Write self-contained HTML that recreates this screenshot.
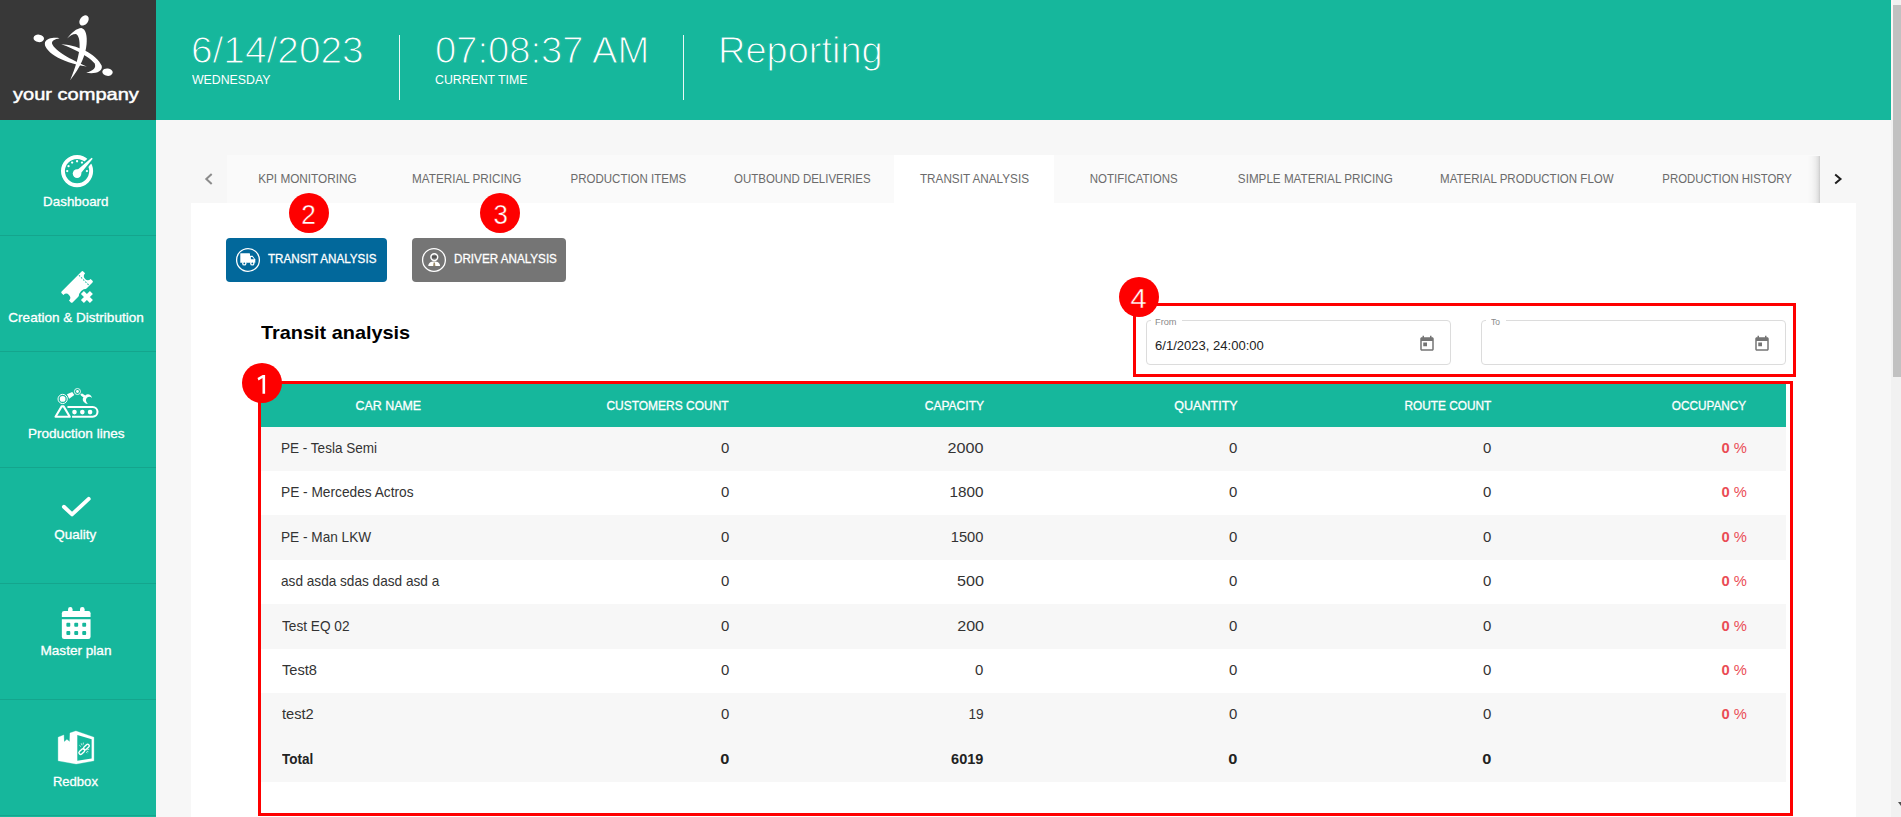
<!DOCTYPE html>
<html lang="en">
<head>
<meta charset="utf-8">
<title>Reporting - Transit analysis</title>
<style>
html,body{margin:0;padding:0;}
body{width:1901px;height:817px;overflow:hidden;background:#f7f7f7;position:relative;font-family:"Liberation Sans",sans-serif;}
.root{position:absolute;left:0;top:0;width:1901px;height:817px;overflow:hidden;}
.a{position:absolute;}
.t{position:absolute;white-space:nowrap;line-height:1;}
.teal{background:#16b79c;}
.sep{position:absolute;left:0;width:156px;height:1px;background:#14a58d;}
.row{position:absolute;left:261px;width:1525px;background:#f7f7f7;}
.circ{position:absolute;width:40px;height:40px;border-radius:50%;background:#fe0000;}
svg{position:absolute;overflow:visible;}
</style>
</head>
<body>
<div class="root">
<!-- header -->
<div class="a teal" style="left:156px;top:0;width:1735px;height:120px;"></div>
<div class="a" style="left:399px;top:35px;width:1px;height:65px;background:#e9f8f5;"></div>
<div class="a" style="left:683px;top:35px;width:1px;height:65px;background:#e9f8f5;"></div>
<!-- logo -->
<div class="a" style="left:0;top:0;width:156px;height:120px;background:#383838;"></div>
<svg style="left:0;top:0" width="156" height="120" viewBox="0 0 156 120"><g transform="translate(28,8) scale(0.09794)" fill="#fff">
<ellipse cx="572" cy="127" rx="58" ry="41" transform="rotate(-52 572 127)"/>
<ellipse cx="110" cy="310" rx="54" ry="38" transform="rotate(8 110 310)"/>
<ellipse cx="812" cy="655" rx="53" ry="38" transform="rotate(8 812 655)"/>
<path d="M400,312 C440,250 500,205 545,203 C592,212 607,290 598,370 C588,480 540,600 430,737 C482,620 522,480 527,400 C530,340 520,280 490,266 C455,266 425,286 400,312 Z"/>
<path d="M322,308 C260,298 188,312 174,350 C150,430 330,560 600,597 C440,528 272,436 246,365 C240,335 270,318 322,308 Z"/>
<path d="M340,369 C480,370 705,466 753,590 C766,655 680,676 594,661 C668,642 700,612 680,565 C648,515 490,420 340,369 Z"/>
</g></svg>
<!-- sidebar -->
<div class="a teal" style="left:0;top:120px;width:156px;height:697px;"></div>
<div class="sep" style="top:235px"></div>
<div class="sep" style="top:351px"></div>
<div class="sep" style="top:467px"></div>
<div class="sep" style="top:583px"></div>
<div class="sep" style="top:699px"></div>
<div class="sep" style="top:815px"></div>
<svg style="left:0;top:0" width="156" height="240" viewBox="0 0 156 240"><g fill="#fff">
<circle cx="77.06" cy="171.09" r="14.1" fill="none" stroke="#fff" stroke-width="3.9"/>
<polygon points="80.06,176.54 95.11,158.95 91.40,155.31 74.06,170.66" fill="#16b79c"/>
<circle cx="67.21" cy="171.09" r="1.15"/><circle cx="68.53" cy="166.16" r="1.15"/><circle cx="72.14" cy="162.56" r="1.15"/><circle cx="77.06" cy="161.24" r="1.15"/><circle cx="81.98" cy="162.56" r="1.15"/><circle cx="86.91" cy="171.09" r="1.15"/>
<polygon points="78.99,175.49 92.73,158.73 91.67,157.67 75.13,171.71"/>
<circle cx="77.06" cy="173.6" r="4.3"/>
</g></svg>
<svg style="left:0;top:0" width="156" height="360" viewBox="0 0 156 360">
<g transform="rotate(-45 77.06 286.94)"><path d="M62.96,279.19 L91.16,279.19 Q92.36,279.19 92.36,280.39 L92.36,283.04 A3.9,3.9 0 0 0 92.36,290.84 L92.36,293.49 Q92.36,294.69 91.16,294.69 L62.96,294.69 Q61.76,294.69 61.76,293.49 L61.76,290.84 A3.9,3.9 0 0 0 61.76,283.04 L61.76,280.39 Q61.76,279.19 62.96,279.19 Z" fill="#fff"/>
<line x1="86.66" y1="279.99" x2="86.66" y2="293.89" stroke="#16b79c" stroke-width="1" stroke-dasharray="1.6 1.4"/></g>
<circle cx="86.9" cy="296.9" r="8.2" fill="#16b79c"/>
<path d="M82.4,292.4 L91.4,301.4 M91.4,292.4 L82.4,301.4" stroke="#fff" stroke-width="4.2" fill="none" stroke-linecap="butt"/>
</svg>
<svg style="left:0;top:0" width="156" height="480" viewBox="0 0 156 480">
<g transform="translate(48,382) scale(0.05141)" fill="#fff" stroke="none">
<circle cx="285" cy="330" r="90" fill="none" stroke="#fff" stroke-width="19"/>
<circle cx="285" cy="330" r="56"/>
<circle cx="573" cy="185" r="59" fill="none" stroke="#fff" stroke-width="17"/>
<circle cx="573" cy="185" r="27"/>
<polygon points="368,240 472,193 512,255 412,328"/>
<path d="M630,232 L665,222 L725,262 C770,215 840,240 858,312 C830,285 790,280 762,302 C725,332 735,390 778,428 C700,420 650,340 690,300 L640,262 Z"/>
<path d="M266,474 L304,474 L424,676 L146,676 Z" fill="none" stroke="#fff" stroke-width="40" stroke-linejoin="round"/>
<path d="M378,486 L868,486 A95,95 0 0 1 868,676 L468,676" fill="none" stroke="#fff" stroke-width="40"/>
<circle cx="515" cy="585" r="45"/><circle cx="668" cy="585" r="45"/><circle cx="818" cy="585" r="45"/>
</g></svg>
<svg style="left:0;top:0" width="156" height="600" viewBox="0 0 156 600">
<path d="M63.9,506.8 L72.05,514.4 L88.7,498.9" fill="none" stroke="#fff" stroke-width="3.9" stroke-linecap="round" stroke-linejoin="round"/></svg>
<svg style="left:0;top:0" width="156" height="700" viewBox="0 0 156 700"><g fill="#fff">
<path d="M61.85,616.9 V613.2 Q61.85,611 64.05,611 H88.37 Q90.57,611 90.57,613.2 V616.9 Z"/>
<rect x="68.05" y="607.04" width="4.5" height="6" rx="2.2"/>
<rect x="80" y="607.04" width="4.6" height="6" rx="2.2"/>
<path d="M61.85,619.14 H90.57 V636.7 Q90.57,639 88.27,639 H64.15 Q61.85,639 61.85,636.7 Z"/>
<rect x="66.38" y="622.82" width="3.9" height="3.9" rx="0.9" fill="#16b79c"/><rect x="66.38" y="630.99" width="3.9" height="3.9" rx="0.9" fill="#16b79c"/><rect x="74.26" y="622.82" width="3.9" height="3.9" rx="0.9" fill="#16b79c"/><rect x="74.26" y="630.99" width="3.9" height="3.9" rx="0.9" fill="#16b79c"/><rect x="82.25" y="622.82" width="3.9" height="3.9" rx="0.9" fill="#16b79c"/><rect x="82.25" y="630.99" width="3.9" height="3.9" rx="0.9" fill="#16b79c"/></g></svg>
<svg style="left:0;top:0" width="156" height="817" viewBox="0 0 156 817">
<polygon points="58.16,737.22 63.79,734.97 64.07,742 66.88,739.48 69.7,741.73 69.98,733 75.89,731.03 93.9,737.22 93.9,760.86 76.17,763.96 58.16,760.86" fill="#fff" stroke="#fff" stroke-width="0.3" stroke-linejoin="round"/>
<polygon points="77.29,734.97 91.64,739.19 91.64,758.61 77.29,760.86" fill="#16b79c"/>
<g fill="none" stroke="#fff" stroke-width="1.4">
<rect x="78.50" y="749.92" width="6.6" height="3.3" rx="1.65" transform="rotate(-43 81.8 751.57)"/>
<rect x="83.10" y="745.35" width="6.6" height="3.3" rx="1.65" transform="rotate(-43 86.4 747)"/>
</g>
<g stroke="#fff" stroke-width="0.7" fill="none"><path d="M79.3,745.2 L80.9,746.6 M81.2,743.3 L82,745.3 M83.4,742.6 L83.2,744.6 M89.2,749.3 L87.3,749.6 M88.4,751.8 L86.6,751 M87.3,753.2 L86.2,752"/></g>
</svg>
<!-- scrollbar -->
<div class="a" style="left:1891px;top:0;width:10px;height:817px;background:#f1f1f1;"></div>
<div class="a" style="left:1891px;top:0;width:2px;height:120px;background:#fbf6f6;"></div>
<div class="a" style="left:1893px;top:5px;width:8px;height:372px;background:#c1c1c1;"></div>
<div class="a" style="left:1897.5px;top:801.5px;width:0;height:0;border-left:3.8px solid transparent;border-right:3.8px solid transparent;border-top:4px solid #505050;"></div>
<!-- tabs -->
<div class="a" style="left:227px;top:155px;width:1593px;height:48px;background:#fafafa;"></div>
<div class="a" style="left:894px;top:155px;width:160px;height:48px;background:#fff;"></div>
<div class="a" style="left:1820px;top:155px;width:36px;height:48px;background:#f7f7f7;"></div>
<div class="a" style="left:1807px;top:156px;width:13px;height:47px;background:linear-gradient(to right,rgba(0,0,0,0) 0%,rgba(0,0,0,0.015) 35%,rgba(0,0,0,0.05) 65%,rgba(0,0,0,0.1) 85%,rgba(0,0,0,0.19) 100%);"></div>
<svg style="left:203px;top:172px" width="12" height="14" viewBox="0 0 12 14"><path d="M8.7 1.9 L3.3 7 L8.7 12.1" fill="none" stroke="#8c8c8c" stroke-width="2"/></svg>
<svg style="left:1831px;top:172px" width="12" height="14" viewBox="0 0 12 14"><path d="M4.2 2.6 L9.5 7 L4.2 11.4" fill="none" stroke="#1e1e1e" stroke-width="2"/></svg>
<!-- panel -->
<div class="a" style="left:191px;top:203px;width:1665px;height:614px;background:#fff;"></div>
<!-- buttons -->
<div class="a" style="left:226px;top:238px;width:161px;height:44px;border-radius:4px;background:#02689b;"></div>
<div class="a" style="left:412px;top:238px;width:154px;height:44px;border-radius:4px;background:#757575;"></div>
<svg style="left:0;top:0" width="600" height="300" viewBox="0 0 600 300">
<circle cx="248" cy="259.97" r="11.4" fill="none" stroke="#fff" stroke-width="1.3"/>
<g fill="#fff"><rect x="240.3" y="253.35" width="9.7" height="9.5" rx="0.4"/>
<path d="M250,255.8 H252.6 L255.3,259.4 V262.85 H250 Z"/>
<circle cx="244.3" cy="263.4" r="2.2"/><circle cx="252.3" cy="263.4" r="2.2"/></g>
<g fill="#02689b"><circle cx="244.3" cy="263.4" r="0.9"/><circle cx="252.3" cy="263.4" r="0.9"/><path d="M250.9,256.9 H252.3 L254.1,259.3 H250.9 Z"/></g>
<circle cx="433.97" cy="259.97" r="11.4" fill="none" stroke="#fff" stroke-width="1.3"/>
<circle cx="434.3" cy="257.1" r="3.4" fill="none" stroke="#fff" stroke-width="1.5"/>
<rect x="432" y="256.3" width="4.6" height="1.3" fill="#444"/>
<path d="M428.3,265.9 C428.3,262.6 430.8,261.4 434.2,261.4 C437.6,261.4 440,262.6 440,265.9 Z" fill="#fff"/>
<path d="M433.6,262.6 h1.3 l0.5,3.3 h-2.3 Z" fill="#9a8a6a"/>
</svg>
<!-- date inputs -->
<div class="a" style="left:1146px;top:320px;width:303px;height:43px;border:1px solid #dcdcdc;border-radius:4px;"></div>
<div class="a" style="left:1151px;top:319px;width:31px;height:3px;background:#fff;"></div>
<div class="a" style="left:1481px;top:320px;width:303px;height:43px;border:1px solid #dcdcdc;border-radius:4px;"></div>
<div class="a" style="left:1486px;top:319px;width:19.5px;height:3px;background:#fff;"></div>
<svg style="left:1418px;top:335px" width="18" height="18" viewBox="0 0 24 24"><path fill="#757575" d="M19 3h-1V1h-2v2H8V1H6v2H5c-1.11 0-1.99.9-1.99 2L3 19c0 1.1.89 2 2 2h14c1.1 0 2-.9 2-2V5c0-1.1-.9-2-2-2zm0 16H5V8h14v11zM7 10h5v5H7z"/></svg><svg style="left:1753px;top:335px" width="18" height="18" viewBox="0 0 24 24"><path fill="#757575" d="M19 3h-1V1h-2v2H8V1H6v2H5c-1.11 0-1.99.9-1.99 2L3 19c0 1.1.89 2 2 2h14c1.1 0 2-.9 2-2V5c0-1.1-.9-2-2-2zm0 16H5V8h14v11zM7 10h5v5H7z"/></svg>
<!-- table -->
<div class="a teal" style="left:261px;top:384px;width:1525px;height:43px;"></div>
<div class="row" style="top:427px;height:44px"></div>
<div class="row" style="top:515.4px;height:44.6px"></div>
<div class="row" style="top:604.4px;height:44.4px"></div>
<div class="row" style="top:693.2px;height:88.4px"></div>
<!-- red annotation boxes -->
<div class="a" style="left:258px;top:381px;width:1529px;height:429px;border:3px solid #fe0000;"></div>
<div class="a" style="left:1133px;top:303px;width:657px;height:67.5px;border:3px solid #fe0000;"></div>
<div class="circ" style="left:289px;top:193px"></div>
<div class="circ" style="left:480.4px;top:193px"></div>
<div class="circ" style="left:242px;top:363.3px"></div>
<div class="circ" style="left:1119px;top:277px"></div>
<svg style="left:0;top:0" width="300" height="400" viewBox="0 0 300 400"><path d="M257.5,378.1 L262.7,375.1 L265.1,375.1 L265.1,393.8 L262.5,393.8 L262.5,378 L258.5,380.4 Z" fill="#fff"/></svg>
<div class="t" style="top:32.28px;font-size:37px;color:#fff;left:190.78px;transform-origin:0 0;transform:scaleX(1.0490);-webkit-text-stroke:1.1px #16b79c;">6/14/2023</div>
<div class="t" style="top:73.94px;font-size:12px;color:#fff;left:192.26px;transform-origin:0 0;transform:scaleX(1.0261);">WEDNESDAY</div>
<div class="t" style="top:32.28px;font-size:37px;color:#fff;left:434.62px;transform-origin:0 0;transform:scaleX(1.0311);-webkit-text-stroke:1.1px #16b79c;">07:08:37 AM</div>
<div class="t" style="top:73.94px;font-size:12px;color:#fff;left:435.23px;transform-origin:0 0;transform:scaleX(1.0245);">CURRENT TIME</div>
<div class="t" style="top:32.28px;font-size:37px;color:#fff;left:718.19px;transform-origin:0 0;transform:scaleX(1.0261);-webkit-text-stroke:1.1px #16b79c;">Reporting</div>
<div class="t" style="top:85.73px;font-size:16.5px;color:#fff;left:12.76px;transform-origin:0 0;transform:scaleX(1.2148);-webkit-text-stroke:0.45px #fff;">your company</div>
<div class="t" style="top:195.00px;font-size:13px;color:#fff;left:44.25px;transform-origin:50% 0;transform:scaleX(1.0278);-webkit-text-stroke:0.3px #fff;">Dashboard</div>
<div class="t" style="top:311.00px;font-size:13px;color:#fff;left:11.21px;transform-origin:50% 0;transform:scaleX(1.0411);-webkit-text-stroke:0.3px #fff;">Creation &amp; Distribution</div>
<div class="t" style="top:427.00px;font-size:13px;color:#fff;left:29.65px;transform-origin:50% 0;transform:scaleX(1.0453);-webkit-text-stroke:0.3px #fff;">Production lines</div>
<div class="t" style="top:528.00px;font-size:13px;color:#fff;left:55.42px;transform-origin:50% 0;transform:scaleX(1.0348);-webkit-text-stroke:0.3px #fff;">Quality</div>
<div class="t" style="top:644.30px;font-size:13px;color:#fff;left:42.07px;transform-origin:50% 0;transform:scaleX(1.0446);-webkit-text-stroke:0.3px #fff;">Master plan</div>
<div class="t" style="top:775.00px;font-size:13px;color:#fff;left:53.29px;transform-origin:50% 0;transform:scaleX(1.0046);-webkit-text-stroke:0.3px #fff;">Redbox</div>
<div class="t" style="top:172.30px;font-size:13px;color:#6b6b6b;left:252.50px;transform-origin:50% 0;transform:scaleX(0.9058);">KPI MONITORING</div>
<div class="t" style="top:172.30px;font-size:13px;color:#6b6b6b;left:406.31px;transform-origin:50% 0;transform:scaleX(0.9000);">MATERIAL PRICING</div>
<div class="t" style="top:172.30px;font-size:13px;color:#6b6b6b;left:562.97px;transform-origin:50% 0;transform:scaleX(0.8834);">PRODUCTION ITEMS</div>
<div class="t" style="top:172.30px;font-size:13px;color:#6b6b6b;left:724.59px;transform-origin:50% 0;transform:scaleX(0.8832);">OUTBOUND DELIVERIES</div>
<div class="t" style="top:172.30px;font-size:13px;color:#6b6b6b;left:913.99px;transform-origin:50% 0;transform:scaleX(0.9018);">TRANSIT ANALYSIS</div>
<div class="t" style="top:172.30px;font-size:13px;color:#6b6b6b;left:1084.04px;transform-origin:50% 0;transform:scaleX(0.8843);">NOTIFICATIONS</div>
<div class="t" style="top:172.30px;font-size:13px;color:#6b6b6b;left:1228.97px;transform-origin:50% 0;transform:scaleX(0.8973);">SIMPLE MATERIAL PRICING</div>
<div class="t" style="top:172.30px;font-size:13px;color:#6b6b6b;left:1429.10px;transform-origin:50% 0;transform:scaleX(0.8867);">MATERIAL PRODUCTION FLOW</div>
<div class="t" style="top:172.30px;font-size:13px;color:#6b6b6b;left:1652.54px;transform-origin:50% 0;transform:scaleX(0.8737);">PRODUCTION HISTORY</div>
<div class="t" style="top:251.80px;font-size:13px;color:#fff;left:268.48px;transform-origin:0 0;transform:scaleX(0.8968);-webkit-text-stroke:0.3px #fff;">TRANSIT ANALYSIS</div>
<div class="t" style="top:251.80px;font-size:13px;color:#fff;left:453.77px;transform-origin:0 0;transform:scaleX(0.8977);-webkit-text-stroke:0.3px #fff;">DRIVER ANALYSIS</div>
<div class="t" style="top:323.84px;font-size:18.5px;color:#000;font-weight:700;left:261.44px;transform-origin:0 0;transform:scaleX(1.0746);">Transit analysis</div>
<div class="t" style="top:200.92px;font-size:27.5px;color:#fff;left:301.44px;transform-origin:50% 0;transform:scaleX(0.9576);-webkit-text-stroke:0.4px #fe0000;">2</div>
<div class="t" style="top:200.92px;font-size:27.5px;color:#fff;left:492.59px;transform-origin:50% 0;transform:scaleX(0.9415);-webkit-text-stroke:0.4px #fe0000;">3</div>
<div class="t" style="top:284.92px;font-size:27.5px;color:#fff;left:1131.47px;transform-origin:50% 0;transform:scaleX(1.0602);-webkit-text-stroke:0.4px #fe0000;">4</div>
<div class="t" style="top:317.78px;font-size:9px;color:#8a8a8a;left:1154.79px;transform-origin:0 0;transform:scaleX(1.0241);">From</div>
<div class="t" style="top:317.88px;font-size:9px;color:#8a8a8a;left:1490.53px;transform-origin:0 0;transform:scaleX(0.9388);">To</div>
<div class="t" style="top:338.70px;font-size:13px;color:#222;left:1154.81px;transform-origin:0 0;transform:scaleX(1.0040);">6/1/2023, 24:00:00</div>
<div class="t" style="top:398.70px;font-size:13px;color:#fff;left:353.92px;transform-origin:50% 0;transform:scaleX(0.9560);-webkit-text-stroke:0.3px #fff;">CAR NAME</div>
<div class="t" style="top:398.70px;font-size:13px;color:#fff;right:1172.04px;transform-origin:100% 0;transform:scaleX(0.9216);-webkit-text-stroke:0.3px #fff;">CUSTOMERS COUNT</div>
<div class="t" style="top:398.70px;font-size:13px;color:#fff;right:917.12px;transform-origin:100% 0;transform:scaleX(0.9270);-webkit-text-stroke:0.3px #fff;">CAPACITY</div>
<div class="t" style="top:398.70px;font-size:13px;color:#fff;right:662.87px;transform-origin:100% 0;transform:scaleX(0.9649);-webkit-text-stroke:0.3px #fff;">QUANTITY</div>
<div class="t" style="top:398.70px;font-size:13px;color:#fff;right:409.62px;transform-origin:100% 0;transform:scaleX(0.9117);-webkit-text-stroke:0.3px #fff;">ROUTE COUNT</div>
<div class="t" style="top:398.70px;font-size:13px;color:#fff;right:154.58px;transform-origin:100% 0;transform:scaleX(0.9060);-webkit-text-stroke:0.3px #fff;">OCCUPANCY</div>
<div class="t" style="top:439.80px;font-size:15px;color:#333;left:280.93px;transform-origin:0 0;transform:scaleX(0.9027);">PE - Tesla Semi</div>
<div class="t" style="top:439.80px;font-size:15px;color:#333;right:1171.71px;transform-origin:100% 0;transform:scaleX(0.9968);">0</div>
<div class="t" style="top:439.80px;font-size:15px;color:#333;right:917.16px;transform-origin:100% 0;transform:scaleX(1.0771);">2000</div>
<div class="t" style="top:439.80px;font-size:15px;color:#333;right:663.61px;transform-origin:100% 0;transform:scaleX(0.9968);">0</div>
<div class="t" style="top:439.80px;font-size:15px;color:#333;right:409.31px;transform-origin:100% 0;transform:scaleX(0.9968);">0</div>
<div class="t" style="top:439.80px;font-size:15px;color:#ea4c55;right:154.51px;transform-origin:100% 0;transform:scaleX(0.9825);"><b>0</b> %</div>
<div class="t" style="top:484.23px;font-size:15px;color:#333;left:280.92px;transform-origin:0 0;transform:scaleX(0.9136);">PE - Mercedes Actros</div>
<div class="t" style="top:484.23px;font-size:15px;color:#333;right:1171.71px;transform-origin:100% 0;transform:scaleX(0.9968);">0</div>
<div class="t" style="top:484.23px;font-size:15px;color:#333;right:917.17px;transform-origin:100% 0;transform:scaleX(1.0180);">1800</div>
<div class="t" style="top:484.23px;font-size:15px;color:#333;right:663.61px;transform-origin:100% 0;transform:scaleX(0.9968);">0</div>
<div class="t" style="top:484.23px;font-size:15px;color:#333;right:409.31px;transform-origin:100% 0;transform:scaleX(0.9968);">0</div>
<div class="t" style="top:484.23px;font-size:15px;color:#ea4c55;right:154.51px;transform-origin:100% 0;transform:scaleX(0.9825);"><b>0</b> %</div>
<div class="t" style="top:528.66px;font-size:15px;color:#333;left:280.92px;transform-origin:0 0;transform:scaleX(0.9085);">PE - Man LKW</div>
<div class="t" style="top:528.66px;font-size:15px;color:#333;right:1171.71px;transform-origin:100% 0;transform:scaleX(0.9968);">0</div>
<div class="t" style="top:528.66px;font-size:15px;color:#333;right:917.19px;transform-origin:100% 0;transform:scaleX(0.9775);">1500</div>
<div class="t" style="top:528.66px;font-size:15px;color:#333;right:663.61px;transform-origin:100% 0;transform:scaleX(0.9968);">0</div>
<div class="t" style="top:528.66px;font-size:15px;color:#333;right:409.31px;transform-origin:100% 0;transform:scaleX(0.9968);">0</div>
<div class="t" style="top:528.66px;font-size:15px;color:#ea4c55;right:154.51px;transform-origin:100% 0;transform:scaleX(0.9825);"><b>0</b> %</div>
<div class="t" style="top:573.09px;font-size:15px;color:#333;left:281.15px;transform-origin:0 0;transform:scaleX(0.9080);">asd asda sdas dasd asd a</div>
<div class="t" style="top:573.09px;font-size:15px;color:#333;right:1171.71px;transform-origin:100% 0;transform:scaleX(0.9968);">0</div>
<div class="t" style="top:573.09px;font-size:15px;color:#333;right:917.47px;transform-origin:100% 0;transform:scaleX(1.0753);">500</div>
<div class="t" style="top:573.09px;font-size:15px;color:#333;right:663.61px;transform-origin:100% 0;transform:scaleX(0.9968);">0</div>
<div class="t" style="top:573.09px;font-size:15px;color:#333;right:409.31px;transform-origin:100% 0;transform:scaleX(0.9968);">0</div>
<div class="t" style="top:573.09px;font-size:15px;color:#ea4c55;right:154.51px;transform-origin:100% 0;transform:scaleX(0.9825);"><b>0</b> %</div>
<div class="t" style="top:617.52px;font-size:15px;color:#333;left:281.81px;transform-origin:0 0;transform:scaleX(0.9094);">Test EQ 02</div>
<div class="t" style="top:617.52px;font-size:15px;color:#333;right:1171.71px;transform-origin:100% 0;transform:scaleX(0.9968);">0</div>
<div class="t" style="top:617.52px;font-size:15px;color:#333;right:917.47px;transform-origin:100% 0;transform:scaleX(1.0716);">200</div>
<div class="t" style="top:617.52px;font-size:15px;color:#333;right:663.61px;transform-origin:100% 0;transform:scaleX(0.9968);">0</div>
<div class="t" style="top:617.52px;font-size:15px;color:#333;right:409.31px;transform-origin:100% 0;transform:scaleX(0.9968);">0</div>
<div class="t" style="top:617.52px;font-size:15px;color:#ea4c55;right:154.51px;transform-origin:100% 0;transform:scaleX(0.9825);"><b>0</b> %</div>
<div class="t" style="top:661.95px;font-size:15px;color:#333;left:281.81px;transform-origin:0 0;transform:scaleX(0.9754);">Test8</div>
<div class="t" style="top:661.95px;font-size:15px;color:#333;right:1171.71px;transform-origin:100% 0;transform:scaleX(0.9968);">0</div>
<div class="t" style="top:661.95px;font-size:15px;color:#333;right:917.21px;transform-origin:100% 0;transform:scaleX(0.9968);">0</div>
<div class="t" style="top:661.95px;font-size:15px;color:#333;right:663.61px;transform-origin:100% 0;transform:scaleX(0.9968);">0</div>
<div class="t" style="top:661.95px;font-size:15px;color:#333;right:409.31px;transform-origin:100% 0;transform:scaleX(0.9968);">0</div>
<div class="t" style="top:661.95px;font-size:15px;color:#ea4c55;right:154.51px;transform-origin:100% 0;transform:scaleX(0.9825);"><b>0</b> %</div>
<div class="t" style="top:706.38px;font-size:15px;color:#333;left:281.83px;transform-origin:0 0;transform:scaleX(0.9771);">test2</div>
<div class="t" style="top:706.38px;font-size:15px;color:#333;right:1171.71px;transform-origin:100% 0;transform:scaleX(0.9968);">0</div>
<div class="t" style="top:706.38px;font-size:15px;color:#333;right:916.97px;transform-origin:100% 0;transform:scaleX(0.9098);">19</div>
<div class="t" style="top:706.38px;font-size:15px;color:#333;right:663.61px;transform-origin:100% 0;transform:scaleX(0.9968);">0</div>
<div class="t" style="top:706.38px;font-size:15px;color:#333;right:409.31px;transform-origin:100% 0;transform:scaleX(0.9968);">0</div>
<div class="t" style="top:706.38px;font-size:15px;color:#ea4c55;right:154.51px;transform-origin:100% 0;transform:scaleX(0.9825);"><b>0</b> %</div>
<div class="t" style="top:750.81px;font-size:15px;color:#222;font-weight:700;left:281.86px;transform-origin:0 0;transform:scaleX(0.8976);">Total</div>
<div class="t" style="top:750.81px;font-size:15px;color:#222;font-weight:700;right:1171.68px;transform-origin:100% 0;transform:scaleX(1.0911);">0</div>
<div class="t" style="top:750.81px;font-size:15px;color:#222;font-weight:700;right:917.60px;transform-origin:100% 0;transform:scaleX(0.9670);">6019</div>
<div class="t" style="top:750.81px;font-size:15px;color:#222;font-weight:700;right:663.58px;transform-origin:100% 0;transform:scaleX(1.0911);">0</div>
<div class="t" style="top:750.81px;font-size:15px;color:#222;font-weight:700;right:409.28px;transform-origin:100% 0;transform:scaleX(1.0911);">0</div>
</div>
</body>
</html>
